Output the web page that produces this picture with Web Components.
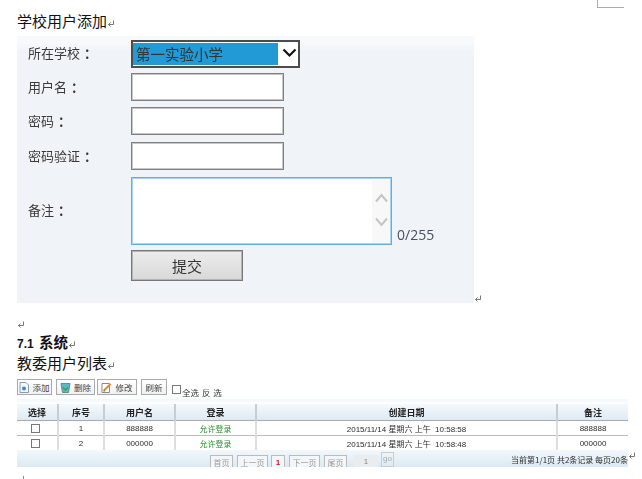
<!DOCTYPE html>
<html lang="zh">
<head>
<meta charset="utf-8">
<title>学校用户添加</title>
<style>
html, body { margin: 0; background: #fff; }
body { width: 642px; height: 479px; overflow: hidden; font-family: "Noto Sans CJK SC", "Liberation Sans", sans-serif; }
.num { font: 700 12px "Liberation Sans", sans-serif; margin-right: 2px; }
</style>
</head>
<body>
<doc-page>
  <doc-line style="margin-top:13px">学校用户添加<para-mark></para-mark></doc-line>
  <school-form></school-form>
  <doc-line style="margin-top:15px;height:8px;line-height:8px"><para-mark></para-mark></doc-line>
  <doc-line style="margin-top:8px" bold><span class="num">7.1</span>&nbsp;系统<para-mark></para-mark></doc-line>
  <doc-line style="margin-top:5px">教委用户列表<para-mark></para-mark></doc-line>
  <user-list></user-list>
</doc-page>

<script>
class ParaMark extends HTMLElement {
  constructor() {
    super();
    this.attachShadow({ mode: 'open' }).innerHTML = `
<style>
:host { display: inline-block; width: 8px; height: 8px; vertical-align: -1px; }
svg { display: block; }
</style>
<svg width="8" height="8" viewBox="0 0 8 8" fill="none" stroke="#777" stroke-width="1">
  <path d="M6.5 0.5V4.5H1.5"/><path d="M3.5 2.5L1.5 4.5L3.5 6.5"/>
</svg>`;
  }
}
customElements.define('para-mark', ParaMark);

class DocPage extends HTMLElement {
  constructor() {
    super();
    this.attachShadow({ mode: 'open' }).innerHTML = `
<style>
:host { display: block; position: relative; height: 479px; padding-left: 17px; box-sizing: border-box; overflow: hidden; }
:host::before { content: ""; display: table; }
.corner { position: absolute; left: 597px; top: 0; width: 26px; height: 7px; border-left: 1px solid #aaa; border-bottom: 1px solid #aaa; }
</style>
<div class="corner"></div>
<slot></slot>`;
  }
}
customElements.define('doc-page', DocPage);

class DocLine extends HTMLElement {
  constructor() {
    super();
    this.attachShadow({ mode: 'open' }).innerHTML = `
<style>
:host { display: block; font-size: 15px; line-height: 16px; height: 16px; color: #111; white-space: nowrap; }
:host([bold]) { font-size: 14.5px; font-weight: 700; }
</style>
<slot></slot>`;
  }
}
customElements.define('doc-line', DocLine);

class FormRow extends HTMLElement {
  constructor() {
    super();
    const label = this.getAttribute('label');
    const lift = this.getAttribute('lift') || 2;
    this.attachShadow({ mode: 'open' }).innerHTML = `
<style>
:host { display: grid; grid-template-columns: 114px auto; align-items: center; justify-content: start; }
.label { padding: 0 0 ${lift}px 11px; font-size: 13px; color: #3a3a3a; white-space: nowrap; }
.colon { margin-left: 4px; font-weight: 700; }
</style>
<div class="label">${label ? `${label}<span class="colon">：</span>` : ''}</div>
<div><slot></slot></div>`;
  }
}
customElements.define('form-row', FormRow);

class SchoolForm extends HTMLElement {
  constructor() {
    super();
    this.attachShadow({ mode: 'open' }).innerHTML = `
<style>
:host { display: flex; align-items: flex-end; margin-top: 7px; }
.panel { width: 457px; height: 267px; padding-top: 4px; box-sizing: border-box; background: linear-gradient(#f8f9fb 0, #f8f9fb 6px, #f0f4f8 15px); filter: blur(0.3px); }
form-row + form-row { margin-top: 6px; }
.select { display: flex; width: 169px; height: 28px; box-sizing: border-box; border: 2px solid #4c4c4c; background: #fff; padding: 1px 0; }
.select .val { width: 145px; background: #229ad6; font-size: 14.5px; line-height: 22px; padding-left: 3px; box-sizing: border-box; color: #333; white-space: nowrap; }
.select svg { margin: 5px 0 0 4px; }
input { display: block; width: 153px; height: 28px; box-sizing: border-box; border: 1px solid #808080; box-shadow: inset 0 0 0 1px #c6c6c6; background: #fff; padding: 0; margin: 0; outline: none; }
.note { display: flex; align-items: flex-end; }
.area { display: flex; justify-content: flex-end; width: 261px; height: 68px; padding: 1px; box-sizing: border-box; border: 1px solid #5db0e2; box-shadow: inset 0 0 0 1px #a8d6f0; background: #fff; }
.bar { width: 18px; background: #f8f8f8; margin-top: 1px; }
.bar svg { display: block; margin: 13px 0 0 3px; }
.bar svg + svg { margin-top: 14px; }
.count { margin-left: 5px; padding-bottom: 2px; font: 14px/17px "Open Sans", sans-serif; color: #4a4f60; }
.submit { display: block; width: 112px; height: 31px; box-sizing: border-box; border: 1px solid #777; box-shadow: inset 0 0 0 1px #b4b4b4; background: linear-gradient(#ececec, #d9d9d9); font: 15px "Noto Sans CJK SC", sans-serif; color: #333; padding: 0; }
</style>
<div class="panel">
  <form-row label="所在学校" lift="4">
    <div class="select"><div class="val">第一实验小学</div>
      <svg width="15" height="10" viewBox="0 0 15 10" fill="none" stroke="#111" stroke-width="2.2"><path d="M1.5 1.5L7.5 7.5L13.5 1.5"/></svg>
    </div>
  </form-row>
  <form-row label="用户名" style="margin-top:5px"><input></form-row>
  <form-row label="密码"><input></form-row>
  <form-row label="密码验证" style="margin-top:7px"><input></form-row>
  <form-row label="备注" lift="4" style="margin-top:7px">
    <div class="note">
      <div class="area"><div class="bar">
        <svg width="13" height="10" viewBox="0 0 13 10" fill="none" stroke="#c4c4c4" stroke-width="2"><path d="M1 8.500L6.500 2L12 8.500"/></svg>
        <svg width="13" height="10" viewBox="0 0 13 10" fill="none" stroke="#c4c4c4" stroke-width="2"><path d="M1 1.500L6.500 8L12 1.500"/></svg>
      </div></div>
      <span class="count">0/255</span>
    </div>
  </form-row>
  <form-row style="margin-top:5px"><button class="submit">提交</button></form-row>
</div>
<para-mark></para-mark>`;
  }
}
customElements.define('school-form', SchoolForm);

class ToolButton extends HTMLElement {
  constructor() {
    super();
    this.attachShadow({ mode: 'open' }).innerHTML = `
<style>
:host { display: inline-flex; align-items: center; justify-content: center; gap: 3px; height: 16px; box-sizing: border-box; border: 1px solid #aaa; background: linear-gradient(#fff, #f1f1f1); font-size: 8.5px; line-height: 12px; padding-bottom: 1px; color: #444; white-space: nowrap; }
::slotted(svg) { display: block; margin-top: 1px; }
</style>
<slot></slot>`;
  }
}
customElements.define('tool-button', ToolButton);

class PageButton extends HTMLElement {
  constructor() {
    super();
    this.attachShadow({ mode: 'open' }).innerHTML = `
<style>
:host { display: inline-flex; align-items: center; justify-content: center; box-sizing: border-box; height: 14px; border: 1px solid #bbb; background: #f4f7fa; font-size: 8px; color: #999; white-space: nowrap; }
</style>
<slot></slot>`;
  }
}
customElements.define('page-button', PageButton);

class UserList extends HTMLElement {
  constructor() {
    super();
    const rows = [['1', '888888', '2015/11/14 星期六 上午&nbsp; 10:58:58'], ['2', '000000', '2015/11/14 星期六 上午&nbsp; 10:58:48']];
    this.attachShadow({ mode: 'open' }).innerHTML = `
<style>
:host { display: block; margin-top: 6px; width: 611px; font-size: 8px; color: #2b2b2b; position: relative; }
.wrap { filter: blur(0.4px); }
.toolbar { display: flex; align-items: flex-start; height: 22px; background: #fff; padding-top: 2px; box-sizing: border-box; }
.toolbar .chk { margin: 6px 0 0 5px; width: 7px; height: 7px; border: 1px solid #777; }
.toolbar .txt { margin: 7px 0 0 1px; color: #333; white-space: nowrap; font-size: 8.5px; word-spacing: 1px; }
.strip { height: 5px; background: linear-gradient(#f1f7fc, #fff); }
table { width: 611px; border-collapse: collapse; table-layout: fixed; }
th { height: 16px; padding: 0; font-size: 9px; color: #222; background: linear-gradient(#f4f9fd, #dfeaf3); border-left: 2px solid #c8cdd2; border-bottom: 1px solid #aaa; }
td { height: 14px; padding: 0; text-align: center; background: #fff; border-left: 2px solid #ddd; border-bottom: 1px solid #bbb; font-family: "Liberation Sans", "Noto Sans CJK SC", sans-serif; }
th:first-child, td:first-child { border-left: 0; }
td:first-child { padding-right: 3px; }
tr:last-child td { border-bottom: 0; }
.box { display: block; width: 7px; height: 7px; border: 1px solid #777; margin: 0 auto; background: #fff; }
.ok { color: #2f8f2f; font-family: "Noto Sans CJK SC", sans-serif; }
.footer { display: flex; align-items: flex-start; height: 17px; overflow: hidden; background: linear-gradient(#f2f8fc, #dce9f3); padding-left: 193px; box-sizing: border-box; }
.pager { display: flex; gap: 4px; padding-top: 5px; }
.go-in { width: 24px; height: 14px; margin-left: 3px; background: #e9edf0; color: #888; text-align: center; line-height: 14px; font-family: "Liberation Sans", sans-serif; }
.go { height: 15px; width: 13px; margin: -3px 0 0 -1px; border: 1px solid #ccc; box-sizing: border-box; color: #aaa; font: 8px/11px "Liberation Sans", sans-serif; text-align: center; }
.info { margin-left: auto; padding-top: 4px; white-space: nowrap; }
.mark { position: absolute; left: 611px; top: 75px; }
.caret { width: 1px; height: 4px; background: #888; margin: 9px 0 0 6px; }
</style>
<div class="wrap">
<div class="toolbar">
  <tool-button style="width:35px">
    <svg width="10" height="11" viewBox="0 0 10 11"><path d="M1 .5H7L9.500 3V10.500H1Z" fill="#f4f8fc" stroke="#8a9bb0"/><circle cx="5" cy="6.500" r="2" fill="#3c86c9"/></svg>添加</tool-button>
  <tool-button style="width:39px;margin-left:4px">
    <svg width="11" height="11" viewBox="0 0 11 11"><path d="M1 1.500H10L8.500 10.500H2.500Z" fill="#5cb8c4" stroke="#5a8c9c"/><path d="M3 5.500L5.500 8L8 5.500" fill="none" stroke="#3f9e46" stroke-width="1.500"/></svg>删除</tool-button>
  <tool-button style="width:40px;margin-left:2px">
    <svg width="11" height="11" viewBox="0 0 11 11"><path d="M1 1.500H8.500V10.500H1Z" fill="#fff" stroke="#8a8a8a"/><path d="M3 8.500L9.500 2" stroke="#e8862a" stroke-width="2"/><path d="M2.500 9L4 8.500" stroke="#3f9e46" stroke-width="1.500"/></svg>修改</tool-button>
  <tool-button style="width:26px;margin-left:4px">刷新</tool-button>
  <span class="chk"></span><span class="txt">全选 反 选</span>
</div>
<div class="strip"></div>
<table>
  <colgroup><col style="width:41px"><col style="width:46px"><col style="width:71px"><col style="width:81px"><col style="width:301px"><col style="width:71px"></colgroup>
  <tr><th>选择</th><th>序号</th><th>用户名</th><th>登录</th><th>创建日期</th><th>备注</th></tr>
  ${rows.map(r => `<tr><td><span class="box"></span></td><td>${r[0]}</td><td>${r[1]}</td><td class="ok">允许登录</td><td>${r[2]}</td><td>${r[1]}</td></tr>`).join('')}
</table>
<div class="footer">
  <div class="pager">
    <page-button style="width:23px">首页</page-button>
    <page-button style="width:31px">上一页</page-button>
    <page-button style="width:14px;margin-left:-1px;color:#e01010;font-weight:700;font-family:'Liberation Sans',sans-serif">1</page-button>
    <page-button style="width:31px">下一页</page-button>
    <page-button style="width:23px">尾页</page-button>
    <div class="go-in">1</div>
    <div class="go">go</div>
  </div>
  <div class="info">当前第1/1页 共2条记录 每页20条</div>
</div>
</div>
<para-mark class="mark"></para-mark>
<div class="caret"></div>`;
  }
}
customElements.define('user-list', UserList);
</script>
</body>
</html>
